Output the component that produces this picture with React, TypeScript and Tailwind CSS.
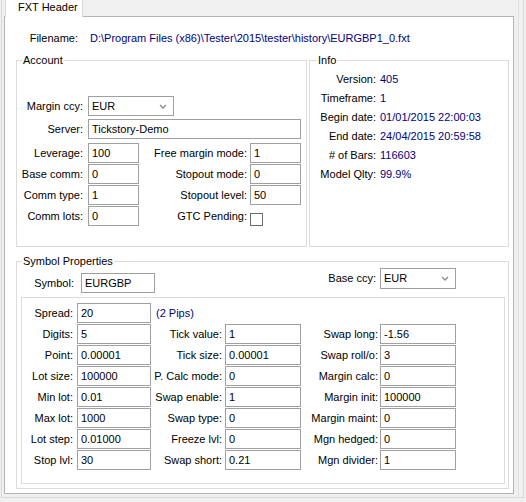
import React from 'react';

const navy = 'text-[#000080]';

function Edit({ w, value }: { w: string; value: string }) {
  return (
    <div className={`h-[20px] ${w} shrink-0 border border-[#a0a0a0] bg-white pl-[3px] leading-[18px] whitespace-nowrap overflow-hidden`}>
      {value}
    </div>
  );
}

function Combo({ w, h, value }: { w: string; h: string; value: string }) {
  return (
    <div className={`${h} ${w} shrink-0 border border-[#a0a0a0] bg-white pl-[3px] pr-[6px] flex items-center justify-between`}>
      <span>{value}</span>
      <svg width="8" height="5" viewBox="0 0 8 5">
        <path d="M1 1 L4 4 L7 1" fill="none" stroke="#8a8a8a" strokeWidth="1.3" />
      </svg>
    </div>
  );
}

function Label({ w, text }: { w: string; text: string }) {
  return <div className={`${w} shrink-0 text-right whitespace-nowrap`}>{text}</div>;
}

const infoRows = [
  ['Version:', '405'],
  ['Timeframe:', '1'],
  ['Begin date:', '01/01/2015 22:00:03'],
  ['End date:', '24/04/2015 20:59:58'],
  ['# of Bars:', '116603'],
  ['Model Qlty:', '99.9%'],
];

const accountRows = [
  ['Leverage:', '100', 'Free margin mode:', '1'],
  ['Base comm:', '0', 'Stopout mode:', '0'],
  ['Comm type:', '1', 'Stopout level:', '50'],
  ['Comm lots:', '0', 'GTC Pending:', null],
];

const symbolRows: [string, string, string, string, string, string][] = [
  ['Spread:', '20', '', '', '', ''],
  ['Digits:', '5', 'Tick value:', '1', 'Swap long:', '-1.56'],
  ['Point:', '0.00001', 'Tick size:', '0.00001', 'Swap roll/o:', '3'],
  ['Lot size:', '100000', 'P. Calc mode:', '0', 'Margin calc:', '0'],
  ['Min lot:', '0.01', 'Swap enable:', '1', 'Margin init:', '100000'],
  ['Max lot:', '1000', 'Swap type:', '0', 'Margin maint:', '0'],
  ['Lot step:', '0.01000', 'Freeze lvl:', '0', 'Mgn hedged:', '0'],
  ['Stop lvl:', '30', 'Swap short:', '0.21', 'Mgn divider:', '1'],
];

export default function App() {
  return (
    <div className="w-[526px] h-[502px] bg-[#f0f0f0] overflow-hidden font-['Liberation_Sans',Arial,sans-serif] text-[11px] text-black">
      <div className="ml-[1px] w-[523px] h-[498px] border-l border-r border-b border-[#d8d8d8]">
        <div className="w-[517px] h-full border-r border-[#e2e2e2]">
          {/* tab strip */}
          <div className="h-[16px] flex items-start">
            <div className="relative z-10 ml-[3px] w-[78px] h-[17px] bg-white border-l border-r border-[#d9d9d9] pl-[12px] leading-[15px]">
              FXT Header
            </div>
          </div>

          {/* tab page */}
          <div className="ml-[2px] w-[510px] h-[478px] bg-white border border-[#b4b4b4]">
            <div className="mt-[14px] flex leading-[14px]">
              <Label w="w-[73px]" text="Filename:" />
              <div className={`ml-[12px] ${navy} whitespace-nowrap`}>
                D:\Program Files (x86)\Tester\2015\tester\history\EURGBP1_0.fxt
              </div>
            </div>

            <div className="mt-[8px] flex">
              {/* Account */}
              <fieldset className="ml-[11px] w-[291px] h-[194px] border border-[#dcdcdc]">
                <legend className="ml-[5px] px-[1px] leading-[14px]">Account</legend>
                <div className="mt-[29px] flex items-center h-[20px]">
                  <Label w="w-[66px]" text="Margin ccy:" />
                  <div className="ml-[5px]">
                    <Combo w="w-[86px]" h="h-[20px]" value="EUR" />
                  </div>
                </div>
                <div className="mt-[3px] flex items-center h-[20px]">
                  <Label w="w-[66px]" text="Server:" />
                  <div className="ml-[5px]">
                    <Edit w="w-[213px]" value="Tickstory-Demo" />
                  </div>
                </div>
                <div className="mt-[4px] flex flex-col gap-[1px]">
                  {accountRows.map(([l1, v1, l2, v2]) => (
                    <div key={l1} className="flex items-center h-[20px]">
                      <Label w="w-[66px]" text={l1 as string} />
                      <div className="ml-[5px]">
                        <Edit w="w-[51px]" value={v1 as string} />
                      </div>
                      <Label w="w-[108px]" text={l2 as string} />
                      <div className="ml-[3px]">
                        {v2 === null ? (
                          <div className="mt-[6px] w-[13px] h-[13px] border border-[#6a6a6a] bg-white" />
                        ) : (
                          <Edit w="w-[51px]" value={v2 as string} />
                        )}
                      </div>
                    </div>
                  ))}
                </div>
              </fieldset>

              {/* Info */}
              <fieldset className="ml-[2px] w-[200px] h-[194px] border border-[#dcdcdc]">
                <legend className="ml-[7px] px-[1px] leading-[14px]">Info</legend>
                <div className="mt-[3px]">
                  {infoRows.map(([l, v]) => (
                    <div key={l} className="flex items-center h-[19px]">
                      <Label w="w-[66px]" text={l} />
                      <div className={`ml-[4px] ${navy} whitespace-nowrap`}>{v}</div>
                    </div>
                  ))}
                </div>
              </fieldset>
            </div>

            {/* Symbol Properties */}
            <fieldset className="mt-[7px] ml-[11px] w-[493px] h-[235px] border border-[#dcdcdc]">
              <legend className="ml-[5px] px-[1px] leading-[14px]">Symbol Properties</legend>
              <div className="h-[29px] flex items-start">
                <div className="mt-[5px] flex items-center">
                  <Label w="w-[57px]" text="Symbol:" />
                  <div className="ml-[7px]">
                    <Edit w="w-[74px]" value="EURGBP" />
                  </div>
                </div>
                <div className="ml-auto mr-[52px] flex items-center">
                  <Label w="w-[80px]" text="Base ccy:" />
                  <div className="ml-[4px]">
                    <Combo w="w-[76px]" h="h-[21px]" value="EUR" />
                  </div>
                </div>
              </div>

              <div className="ml-[4px] w-[484px] h-[187px] border border-[#dcdcdc] pt-[5px] flex flex-col gap-[1px]">
                {symbolRows.map(([l1, v1, l2, v2, l3, v3]) => (
                  <div key={l1} className="flex items-center h-[20px]">
                    <Label w="w-[51px]" text={l1} />
                    <div className="ml-[4px]">
                      <Edit w="w-[74px]" value={v1} />
                    </div>
                    {l2 === '' ? (
                      <div className={`ml-[5px] ${navy}`}>(2 Pips)</div>
                    ) : (
                      <>
                        <Label w="w-[71px]" text={l2} />
                        <div className="ml-[3px]">
                          <Edit w="w-[76px]" value={v2} />
                        </div>
                        <Label w="w-[77px]" text={l3} />
                        <div className="ml-[2px]">
                          <Edit w="w-[76px]" value={v3} />
                        </div>
                      </>
                    )}
                  </div>
                ))}
              </div>
            </fieldset>
          </div>
        </div>
      </div>
    </div>
  );
}
